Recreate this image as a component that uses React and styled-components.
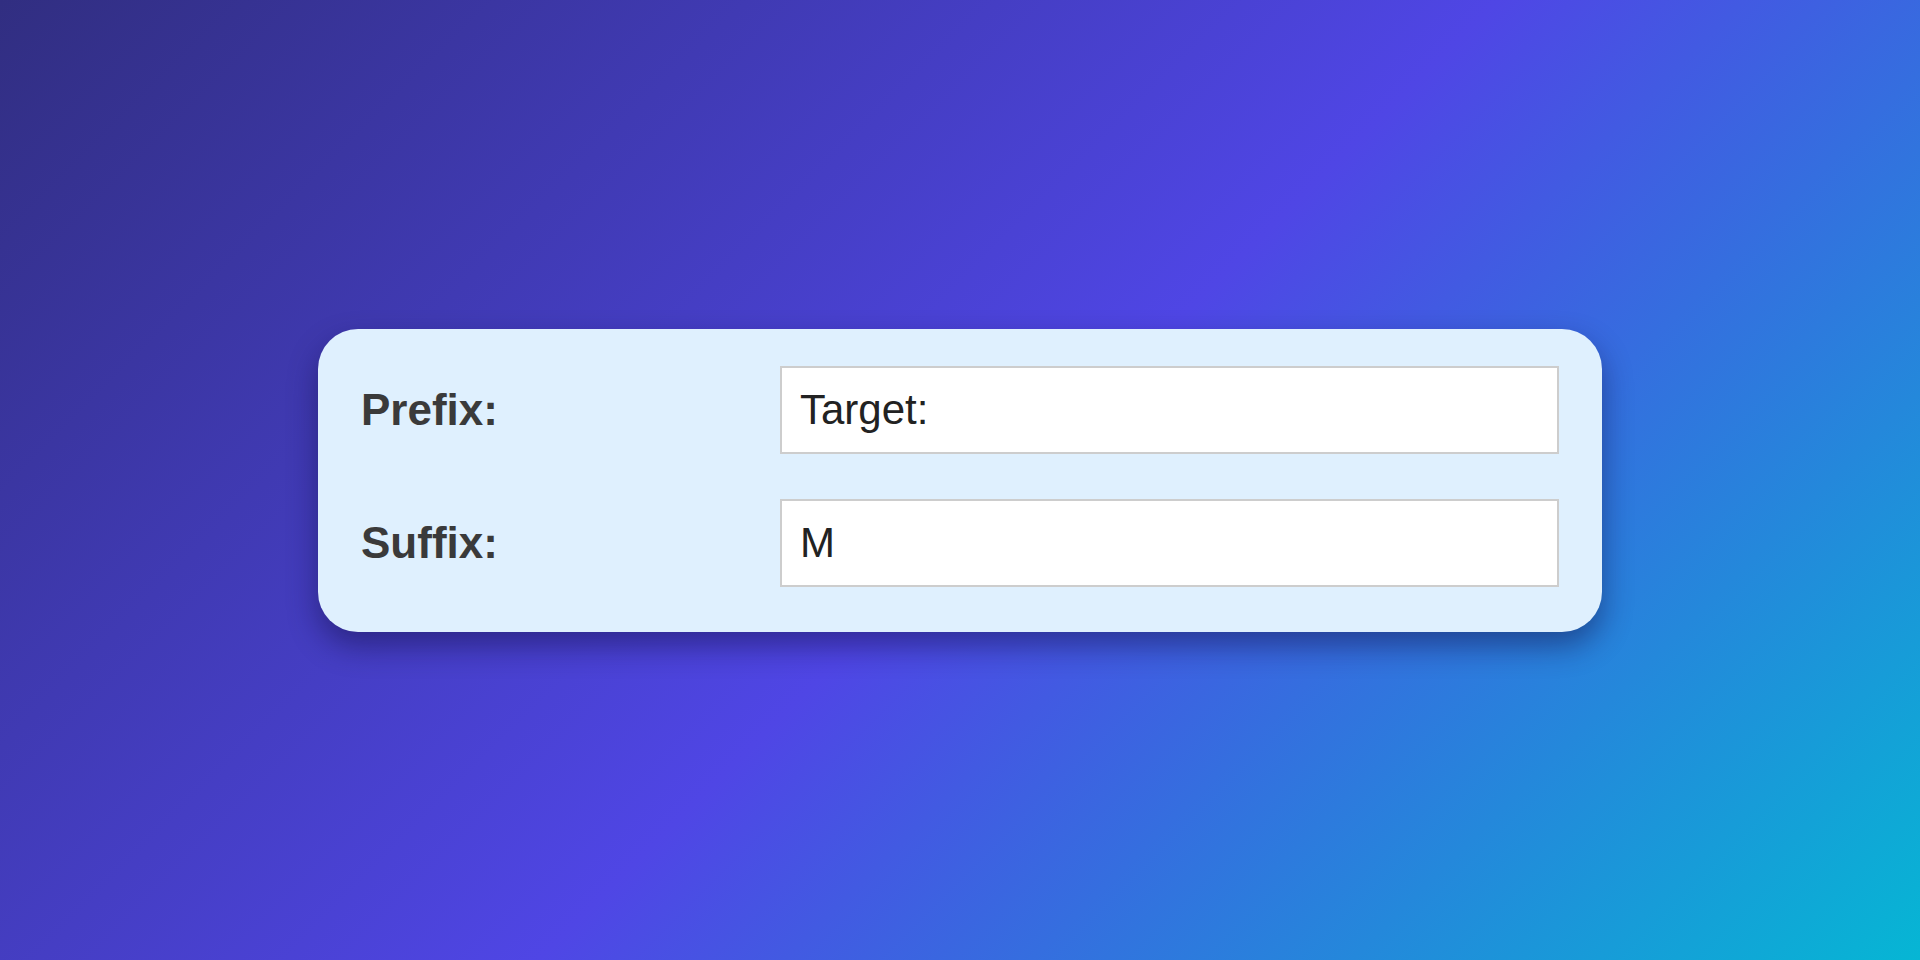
import React from "react";
import styled, { createGlobalStyle } from "styled-components";

const GlobalStyle = createGlobalStyle`
  html, body {
    margin: 0;
    padding: 0;
  }
  body {
    font-family: "Liberation Sans", Arial, sans-serif;
  }
`;

const Page = styled.div`
  min-height: 100vh;
  display: flex;
  align-items: center;
  justify-content: center;
  background: linear-gradient(135deg, #312e81 0%, #4f46e5 52%, #06b6d4 100%);
`;

const Card = styled.div`
  width: 1284px;
  box-sizing: border-box;
  padding: 37px 43px 45px 43px;
  background: #dff0fe;
  border-radius: 40px;
  box-shadow: 0 14px 30px rgba(15, 12, 60, 0.45);
  display: grid;
  grid-template-columns: 136px 1fr;
  column-gap: 283px;
  row-gap: 45px;
  align-items: center;
`;

const Label = styled.label`
  text-align: center;
  font-size: 44px;
  font-weight: bold;
  color: #3a3a3a;
  white-space: nowrap;
`;

const Field = styled.input`
  box-sizing: border-box;
  width: 100%;
  height: 88px;
  padding: 0 18px;
  border: 2px solid #cdcdcd;
  background: #ffffff;
  font-family: "Liberation Sans", Arial, sans-serif;
  font-size: 42px;
  color: #222222;
  outline: none;
`;

const fields = [
  { id: "prefix", label: "Prefix:", value: "Target:" },
  { id: "suffix", label: "Suffix:", value: "M" },
];

export default function App() {
  return (
    <>
      <GlobalStyle />
      <Page>
        <Card>
          {fields.map((f) => (
            <React.Fragment key={f.id}>
              <Label htmlFor={f.id}>{f.label}</Label>
              <Field id={f.id} type="text" defaultValue={f.value} />
            </React.Fragment>
          ))}
        </Card>
      </Page>
    </>
  );
}
